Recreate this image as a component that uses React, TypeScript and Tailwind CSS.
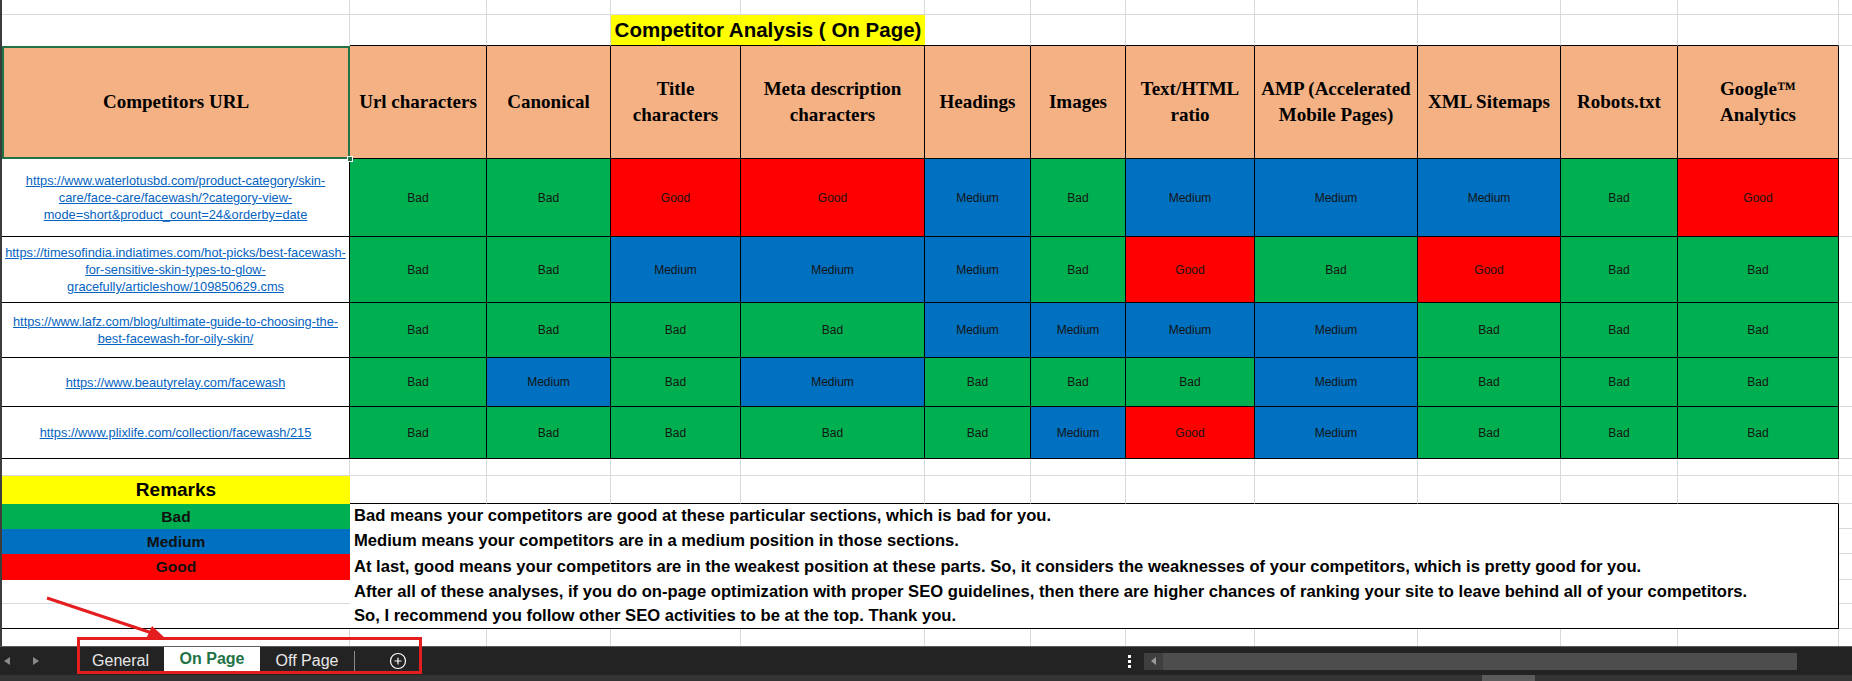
import React from "react";
import { CirclePlus } from "lucide-react";

type Score = "Bad" | "Medium" | "Good";

const SCORE_BG: Record<Score, string> = {
  Bad: "bg-[#00B050]",
  Medium: "bg-[#0070C0]",
  Good: "bg-[#FF0000]",
};

const HEADERS: string[][] = [
  ["Url characters"],
  ["Canonical"],
  ["Title", "characters"],
  ["Meta description", "characters"],
  ["Headings"],
  ["Images"],
  ["Text/HTML", "ratio"],
  ["AMP (Accelerated", "Mobile Pages)"],
  ["XML Sitemaps"],
  ["Robots.txt"],
  ["Google™", "Analytics"],
];

const ROWS: { url: string[]; scores: Score[] }[] = [
  {
    url: [
      "https://www.waterlotusbd.com/product-category/skin-",
      "care/face-care/facewash/?category-view-",
      "mode=short&product_count=24&orderby=date",
    ],
    scores: ["Bad", "Bad", "Good", "Good", "Medium", "Bad", "Medium", "Medium", "Medium", "Bad", "Good"],
  },
  {
    url: [
      "https://timesofindia.indiatimes.com/hot-picks/best-facewash-",
      "for-sensitive-skin-types-to-glow-",
      "gracefully/articleshow/109850629.cms",
    ],
    scores: ["Bad", "Bad", "Medium", "Medium", "Medium", "Bad", "Good", "Bad", "Good", "Bad", "Bad"],
  },
  {
    url: ["https://www.lafz.com/blog/ultimate-guide-to-choosing-the-", "best-facewash-for-oily-skin/"],
    scores: ["Bad", "Bad", "Bad", "Bad", "Medium", "Medium", "Medium", "Medium", "Bad", "Bad", "Bad"],
  },
  {
    url: ["https://www.beautyrelay.com/facewash"],
    scores: ["Bad", "Medium", "Bad", "Medium", "Bad", "Bad", "Bad", "Medium", "Bad", "Bad", "Bad"],
  },
  {
    url: ["https://www.plixlife.com/collection/facewash/215"],
    scores: ["Bad", "Bad", "Bad", "Bad", "Bad", "Medium", "Good", "Medium", "Bad", "Bad", "Bad"],
  },
];

const REMARKS = [
  "Bad means your competitors are good at these particular sections, which is bad for you.",
  "Medium means your competitors are in a medium position in those sections.",
  "At last, good means your competitors are in the weakest position at these parts. So, it considers the weaknesses of your competitors, which is pretty good for you.",
  "After all of these analyses, if you do on-page optimization with proper SEO guidelines, then there are higher chances of ranking your site to leave behind all of your competitors.",
  "So, I recommend you follow other SEO activities to be at the top. Thank you.",
];

const REMARK_H = ["h-[25px]", "h-[25px]", "h-[26px]", "h-[24px]", "h-[24px]"];

// plain gridline cell
const GRID = "border-r border-b border-[#d9d9d9]";
const GRID_LAST = "border-b border-[#d9d9d9]";

function GridRow({ bottom = true }: { bottom?: boolean }) {
  return (
    <>
      {Array.from({ length: 12 }).map((_, i) => (
        <div key={i} className={bottom ? GRID : "border-r border-[#d9d9d9]"} />
      ))}
      <div className={bottom ? GRID_LAST : ""} />
    </>
  );
}

export default function App() {
  return (
    <div className="relative w-[1852px] h-[681px] overflow-hidden bg-white font-['Liberation_Sans',Arial,sans-serif]">
      <div className="grid border-l-2 border-[#3c3c3c] grid-cols-[348px_137px_124px_130px_184px_106px_95px_129px_163px_143px_117px_161px_1fr] grid-rows-[15px_31px_113px_78px_66px_55px_49px_52px_17px_28px_25px_25px_26px_24px_25px_17px]">
        {/* row 1 */}
        <GridRow />

        {/* row 2: title */}
        <div className="border-r border-[#d9d9d9]" />
        <div className="border-r border-r-[#d9d9d9] border-b border-b-black" />
        <div className="border-r border-r-[#d9d9d9] border-b border-b-black" />
        <div className="col-span-2 bg-[#FFFF00] border-b border-b-black flex items-center justify-center">
          <span className="text-[20.5px] font-bold text-black whitespace-nowrap">
            Competitor Analysis ( On Page)
          </span>
        </div>
        {Array.from({ length: 7 }).map((_, i) => (
          <div key={i} className="border-r border-r-[#d9d9d9] border-b border-b-black" />
        ))}
        <div className={GRID_LAST} />

        {/* header row */}
        <div className="relative bg-[#F4B183] shadow-[inset_0_0_0_2px_#217346] flex items-center justify-center">
          <span className="font-['Liberation_Serif',serif] font-bold text-[19px] text-black">Competitors URL</span>
          <div className="absolute -right-[3px] -bottom-[3px] w-[6px] h-[6px] bg-[#217346] border border-white" />
        </div>
        {HEADERS.map((lines, i) => (
          <div
            key={i}
            className="bg-[#F4B183] border-r border-b border-black flex flex-col items-center justify-center font-['Liberation_Serif',serif] font-bold text-[19px] leading-[26px] text-black text-center"
          >
            {lines.map((l) => (
              <span key={l} className="whitespace-nowrap">
                {l}
              </span>
            ))}
          </div>
        ))}
        <div className={GRID_LAST} />

        {/* data rows */}
        {ROWS.map((row, r) => (
          <React.Fragment key={r}>
            <div className="bg-white border-r border-b border-black flex flex-col items-center justify-center">
              {row.url.map((l) => (
                <a
                  key={l}
                  href="#"
                  className="text-[12.8px] leading-[17px] text-[#0563C1] underline whitespace-nowrap"
                >
                  {l}
                </a>
              ))}
            </div>
            {row.scores.map((s, i) => (
              <div
                key={i}
                className={`${SCORE_BG[s]} border-r border-b border-black flex items-center justify-center text-[12px] text-[#141414]`}
              >
                {s}
              </div>
            ))}
            <div className={GRID_LAST} />
          </React.Fragment>
        ))}

        {/* spacer row */}
        <GridRow />

        {/* remarks header */}
        <div className="bg-[#FFFF00] flex items-center justify-center text-[19px] font-bold text-black">Remarks</div>
        {Array.from({ length: 11 }).map((_, i) => (
          <div key={i} className="border-r border-r-[#d9d9d9] border-b border-b-black" />
        ))}
        <div className={GRID_LAST} />

        {/* remarks legend + text box */}
        <div className="bg-[#00B050] flex items-center justify-center text-[15.5px] font-bold text-[#111]">Bad</div>
        <div className="col-span-11 row-span-5 border-r border-b border-black flex flex-col pl-[4px] text-[16.6px] font-bold text-black">
          {REMARKS.map((t, i) => (
            <div key={i} className={`flex items-center whitespace-nowrap ${REMARK_H[i]}`}>
              {t}
            </div>
          ))}
        </div>
        <div className={GRID_LAST} />
        <div className="bg-[#0070C0] flex items-center justify-center text-[15.5px] font-bold text-[#111]">Medium</div>
        <div className={GRID_LAST} />
        <div className="bg-[#FF0000] flex items-center justify-center text-[15.5px] font-bold text-[#111]">Good</div>
        <div className={GRID_LAST} />
        <div className="border-b border-[#d9d9d9]" />
        <div className={GRID_LAST} />
        <div className="border-b border-black" />
        <div className={GRID_LAST} />

        {/* last row */}
        <GridRow bottom={false} />
      </div>

      {/* sheet tab bar */}
      <div className="h-[35px] bg-[#232323] border-t border-[#5e5e5e] flex flex-col">
        <div className="h-[28px] flex items-center">
          <div className="w-[77px] h-full flex items-center">
            <svg width="8" height="10" viewBox="0 0 8 10" className="ml-[3px]">
              <polygon points="7,1 1,5 7,9" fill="#8a8a8a" />
            </svg>
            <svg width="8" height="10" viewBox="0 0 8 10" className="ml-[21px]">
              <polygon points="1,1 7,5 1,9" fill="#8a8a8a" />
            </svg>
          </div>
          <div className="w-[87px] h-full flex items-center justify-center text-[16px] text-[#e8e8e8]">General</div>
          <div className="w-[96px] h-[24px] self-start bg-white flex items-center justify-center text-[16px] font-bold text-[#217346]">
            On Page
          </div>
          <div className="w-[94px] h-full flex items-center justify-center text-[16px] text-[#e8e8e8]">Off Page</div>
          <div className="w-px h-[21px] bg-[#8a8a8a]" />
          <div className="ml-[34px]">
            <CirclePlus size={18} color="#ffffff" strokeWidth={1.6} />
          </div>
          <div className="flex-1" />
          <div className="w-[6px] flex flex-col items-center gap-[2px] mr-[12px]">
            <div className="w-[3px] h-[3px] bg-white" />
            <div className="w-[3px] h-[3px] bg-white" />
            <div className="w-[3px] h-[3px] bg-white" />
          </div>
          <div className="w-[653px] h-[17px] bg-[#4d4d4d] flex items-center">
            <div className="w-[19px] h-full bg-[#3f3f3f] flex items-center justify-center">
              <svg width="5" height="8" viewBox="0 0 5 8">
                <polygon points="5,0 0,4 5,8" fill="#9a9a9a" />
              </svg>
            </div>
          </div>
          <div className="w-[55px]" />
        </div>
        <div className="h-[6px] bg-[#333333] flex">
          <div className="ml-[1482px] w-[53px] h-full bg-[#5c5c5c]" />
        </div>
      </div>

      {/* annotation: red box and arrow */}
      <div className="absolute left-[77px] top-[637px] w-[345px] h-[37px] border-[3px] border-[#E41E1E]" />
      <svg className="absolute left-0 top-0" width="1852" height="681" viewBox="0 0 1852 681">
        <line x1="47" y1="598" x2="152" y2="633" stroke="#E41E1E" strokeWidth="3" />
        <polygon points="165,638 146,639 152,626" fill="#E41E1E" />
      </svg>
    </div>
  );
}
